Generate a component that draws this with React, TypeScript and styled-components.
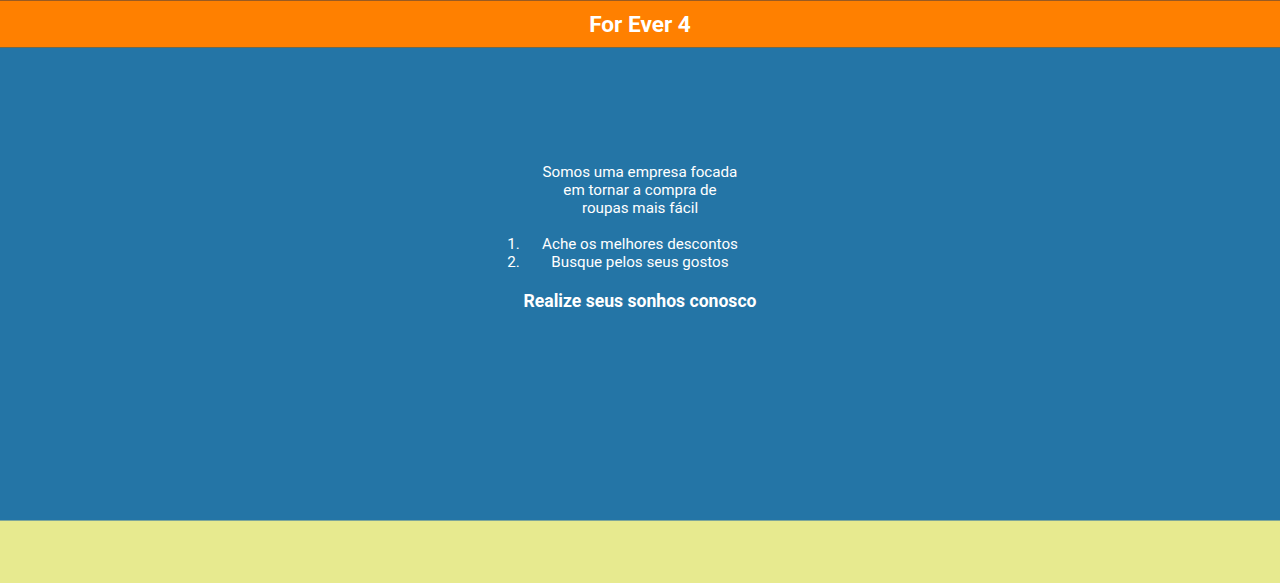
import React from 'react';
import styled, { createGlobalStyle } from 'styled-components';

const GlobalStyle = createGlobalStyle`
  html, body { margin: 0; padding: 0; }
  body { font-family: Roboto, "Liberation Sans", sans-serif; background: #e7ea8f; }
`;

const Page = styled.div`
  display: flex;
  flex-direction: column;
  min-height: 583px;
`;

const Header = styled.header`
  height: 48px;
  box-sizing: border-box;
  background: #ff8000;
  border-top: 1px solid #9a5b22;
  border-bottom: 1px solid #6d6a4e;
  display: flex;
  align-items: center;
  justify-content: center;
`;

const Title = styled.h1`
  margin: 0;
  padding-top: 1px;
  color: #ffffff;
  font-size: 22.6px;
  font-weight: 700;
`;

const Main = styled.main`
  height: 473px;
  background: #2475a6;
  border-bottom: 1px solid #7fa79a;
  box-sizing: border-box;
  padding-top: 115px;
  display: flex;
  justify-content: center;
  color: #ffffff;
`;

const Content = styled.div`
  width: fit-content;
  text-align: center;
`;

const Intro = styled.p`
  margin: 0;
  font-size: 15.2px;
  line-height: 18px;
`;

const List = styled.ol`
  margin: 18px 0 0;
  padding: 0;
  font-size: 15.2px;
  line-height: 18px;
`;

const Item = styled.li`
  text-align: center;
`;

const Slogan = styled.h2`
  margin: 20px 0 0;
  font-size: 17.6px;
  line-height: 21px;
  font-weight: 700;
`;

const Footer = styled.footer`
  flex: 1;
  background: #e7ea8f;
`;

export default function App() {
  return (
    <>
      <GlobalStyle />
      <Page>
        <Header>
          <Title>For Ever 4</Title>
        </Header>
        <Main>
          <Content>
            <Intro>
              Somos uma empresa focada
              <br />
              em tornar a compra de
              <br />
              roupas mais fácil
            </Intro>
            <List>
              <Item>Ache os melhores descontos</Item>
              <Item>Busque pelos seus gostos</Item>
            </List>
            <Slogan>Realize seus sonhos conosco</Slogan>
          </Content>
        </Main>
        <Footer />
      </Page>
    </>
  );
}
